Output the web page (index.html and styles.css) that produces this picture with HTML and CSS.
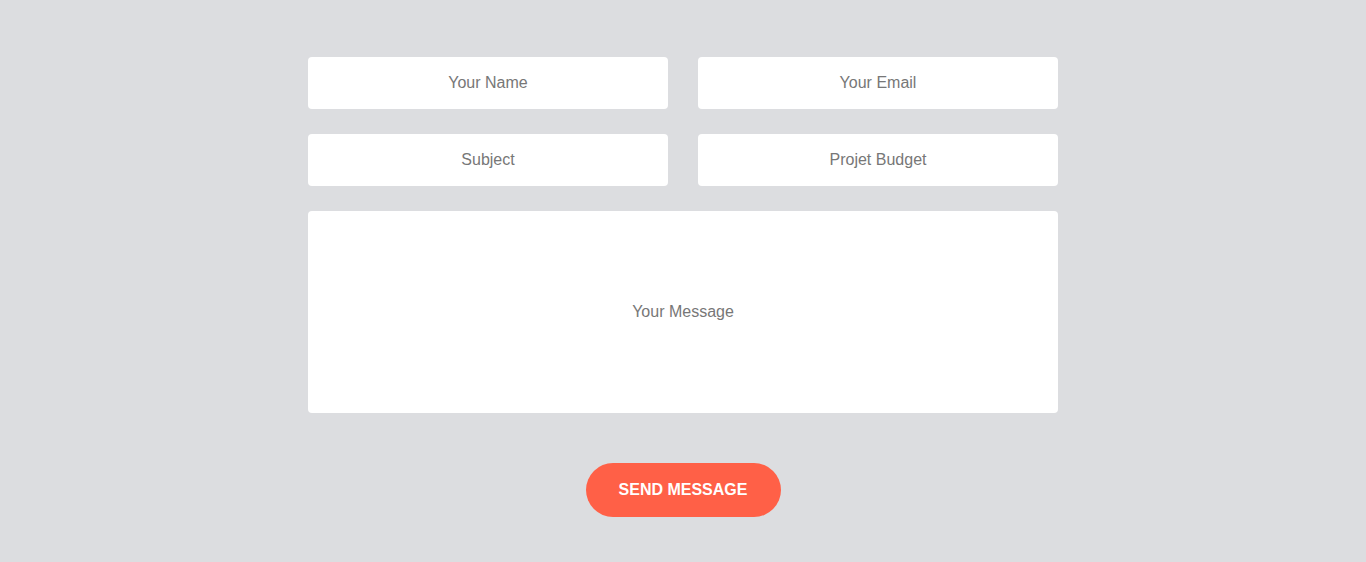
FILE: index.html
```html
<!DOCTYPE html>
<html>
<head>
<meta charset="utf-8">
<link rel="stylesheet" href="styles.css">
</head>
<body>
<form class="contact">
  <div class="grid">
    <input class="field" type="text" placeholder="Your Name">
    <input class="field" type="email" placeholder="Your Email">
    <input class="field" type="text" placeholder="Subject">
    <input class="field" type="text" placeholder="Projet Budget">
    <textarea class="field message" placeholder="Your Message"></textarea>
  </div>
  <div class="actions">
    <button class="send" type="button">SEND MESSAGE</button>
  </div>
</form>
</body>
</html>
```
FILE: styles.css
```css
html, body {
  margin: 0;
  padding: 0;
  background: #dcdde0;
  font-family: "Liberation Sans", Arial, sans-serif;
}
.contact {
  width: 750px;
  margin: 0 auto;
  padding-top: 57px;
}
.grid {
  display: grid;
  grid-template-columns: 360px 360px;
  column-gap: 30px;
  row-gap: 25px;
}
.field {
  box-sizing: border-box;
  height: 52px;
  border: none;
  border-radius: 4px;
  background: #fff;
  font-family: "Liberation Sans", Arial, sans-serif;
  font-size: 16px;
  color: #666;
  text-align: center;
  outline: none;
  padding: 0 10px;
  margin: 0;
}
.field::placeholder {
  color: #777;
  opacity: 1;
}
.message {
  grid-column: 1 / 3;
  height: 202px;
  resize: none;
  padding-top: 91px;
  line-height: 20px;
  display: block;
}
.actions {
  display: flex;
  justify-content: center;
  padding-top: 50px;
}
.send {
  width: 195px;
  height: 54px;
  border: none;
  border-radius: 27px;
  background: #ff6047;
  color: #fff;
  font-family: "Liberation Sans", Arial, sans-serif;
  font-weight: bold;
  font-size: 16px;
  cursor: pointer;
}
```
